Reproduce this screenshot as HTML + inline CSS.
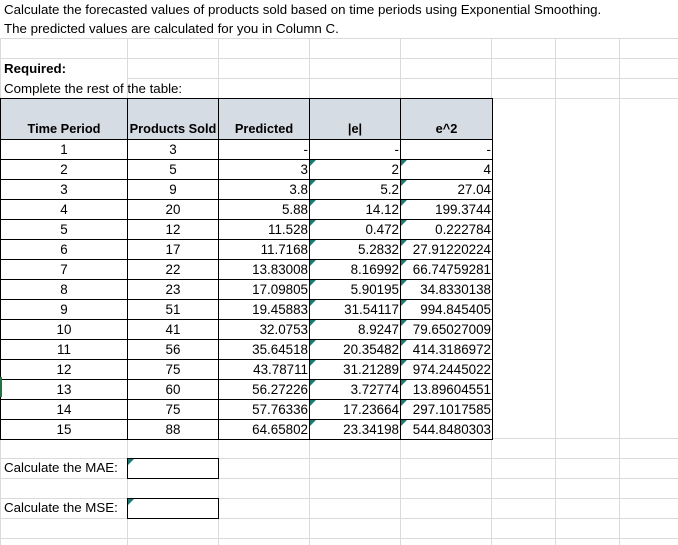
<!DOCTYPE html>
<html><head><meta charset="utf-8"><style>
body{margin:0;width:678px;height:545px;overflow:hidden;background:#fff;font-family:"Liberation Sans",sans-serif;font-size:13.3px;color:#000;position:relative}
.hl{position:absolute;left:0;width:678px;height:1px;background:#dadada}
.vl{position:absolute;top:38px;width:1px;height:507px;background:#dadada}
.t{position:absolute;left:4px;white-space:nowrap;line-height:20px}
table{position:absolute;left:0;top:98px;width:492px;border-collapse:collapse;table-layout:fixed;background:#fff;font-size:13.4px}
td{border:1px solid #000;height:19px;padding:0 1px;line-height:19px;position:relative;white-space:nowrap;overflow:visible}
tr.h td{background:#d6dce4;font-weight:bold;height:39px;vertical-align:bottom;text-align:center;line-height:18px;padding-bottom:1px;font-size:12.8px}
td.c{text-align:center}td.r{text-align:right;padding-right:1px}
.g:before{content:"";position:absolute;left:0;top:0;border-top:6px solid #1f7872;border-right:6px solid transparent}
.box{position:absolute;border:1px solid #000;background:#fff}
</style></head><body>
<div class="hl" style="top:38px"></div><div class="hl" style="top:58px"></div><div class="hl" style="top:78px"></div><div class="hl" style="top:98px"></div>
<div class="hl" style="top:438px"></div><div class="hl" style="top:458px"></div><div class="hl" style="top:478px"></div><div class="hl" style="top:498px"></div><div class="hl" style="top:518px"></div><div class="hl" style="top:538px"></div>
<div class="vl" style="left:0"></div><div class="vl" style="left:127px"></div><div class="vl" style="left:218px"></div><div class="vl" style="left:309px"></div><div class="vl" style="left:400px"></div><div class="vl" style="left:491px"></div><div class="vl" style="left:555px"></div><div class="vl" style="left:619px"></div>
<div style="position:absolute;left:0;top:0;width:678px;height:38px;background:#fff"></div>
<div style="position:absolute;left:1px;top:59px;width:126px;height:39px;background:#fff"></div>
<div class="t" style="top:0">Calculate the forecasted values of products sold based on time periods using Exponential Smoothing.</div>
<div class="t" style="top:19px">The predicted values are calculated for you in Column C.</div>
<div class="t" style="top:59px;font-weight:bold">Required:</div>
<div class="t" style="top:79px">Complete the rest of the table:</div>
<table>
<colgroup><col style="width:127px"><col style="width:91px"><col style="width:91px"><col style="width:91px"><col style="width:92px"></colgroup>
<tr class="h"><td>Time Period</td><td>Products Sold</td><td>Predicted</td><td>|e|</td><td>e^2</td></tr>
<tr><td class="c">1</td><td class="c">3</td><td class="r">-</td><td class="r">-</td><td class="r">-</td></tr>
<tr><td class="c">2</td><td class="c">5</td><td class="r">3</td><td class="r g">2</td><td class="r g">4</td></tr>
<tr><td class="c">3</td><td class="c">9</td><td class="r">3.8</td><td class="r g">5.2</td><td class="r g">27.04</td></tr>
<tr><td class="c">4</td><td class="c">20</td><td class="r">5.88</td><td class="r g">14.12</td><td class="r g">199.3744</td></tr>
<tr><td class="c">5</td><td class="c">12</td><td class="r">11.528</td><td class="r g">0.472</td><td class="r g">0.222784</td></tr>
<tr><td class="c">6</td><td class="c">17</td><td class="r">11.7168</td><td class="r g">5.2832</td><td class="r g">27.91220224</td></tr>
<tr><td class="c">7</td><td class="c">22</td><td class="r">13.83008</td><td class="r g">8.16992</td><td class="r g">66.74759281</td></tr>
<tr><td class="c">8</td><td class="c">23</td><td class="r">17.09805</td><td class="r g">5.90195</td><td class="r g">34.8330138</td></tr>
<tr><td class="c">9</td><td class="c">51</td><td class="r">19.45883</td><td class="r g">31.54117</td><td class="r g">994.845405</td></tr>
<tr><td class="c">10</td><td class="c">41</td><td class="r">32.0753</td><td class="r g">8.9247</td><td class="r g">79.65027009</td></tr>
<tr><td class="c">11</td><td class="c">56</td><td class="r">35.64518</td><td class="r g">20.35482</td><td class="r g">414.3186972</td></tr>
<tr><td class="c">12</td><td class="c">75</td><td class="r">43.78711</td><td class="r g">31.21289</td><td class="r g">974.2445022</td></tr>
<tr><td class="c">13</td><td class="c">60</td><td class="r">56.27226</td><td class="r g">3.72774</td><td class="r g">13.89604551</td></tr>
<tr><td class="c">14</td><td class="c">75</td><td class="r">57.76336</td><td class="r g">17.23664</td><td class="r g">297.1017585</td></tr>
<tr><td class="c">15</td><td class="c">88</td><td class="r">64.65802</td><td class="r g">23.34198</td><td class="r g">544.8480303</td></tr>
</table>
<div style="position:absolute;left:0;top:377px;width:2px;height:20px;background:#217346"></div>
<div class="t" style="top:458px">Calculate the MAE:</div>
<div class="box g" style="left:127px;top:458px;width:90px;height:19px"></div>
<div class="t" style="top:498px">Calculate the MSE:</div>
<div class="box g" style="left:127px;top:498px;width:90px;height:19px"></div>
</body></html>
